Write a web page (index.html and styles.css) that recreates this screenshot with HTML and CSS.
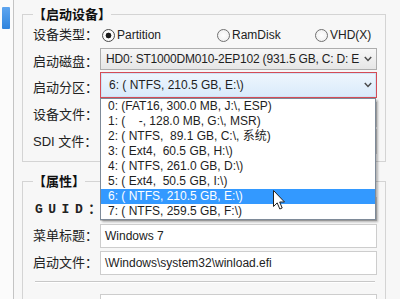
FILE: index.html
```html
<!DOCTYPE html>
<html lang="zh-CN">
<head>
<meta charset="utf-8">
<title>启动设备</title>
<link rel="stylesheet" href="styles.css">
</head>
<body>
<div class="window">
  <aside class="sidebar"><div class="side-item"></div></aside>
  <main class="main">
    <fieldset class="group g1">
      <legend class="group-title">【启动设备】</legend>
      <div class="row r-type">
        <span class="label">设备类型：</span>
        <div class="radios">
          <span class="radio"><span class="dot on"></span>Partition</span>
          <span class="radio"><span class="dot"></span>RamDisk</span>
          <span class="radio"><span class="dot"></span>VHD(X)</span>
        </div>
      </div>
      <div class="row r-disk">
        <span class="label low">启动磁盘：</span>
        <div class="select">
          <span class="value tight">HD0: ST1000DM010-2EP102 (931.5 GB, C: D: E</span>
          <svg class="chev" width="8" height="6" viewBox="0 0 8 6"><polyline points="0.8,1 4,4.4 7.2,1" fill="none" stroke="#4a4a4a" stroke-width="1.5"/></svg>
        </div>
      </div>
      <div class="row r-part">
        <span class="label low">启动分区：</span>
        <div class="select-wrap">
          <div class="select active">
            <span class="value">6: ( NTFS, 210.5 GB, E:\)</span>
            <svg class="chev" width="8" height="6" viewBox="0 0 8 6"><polyline points="0.8,1 4,4.4 7.2,1" fill="none" stroke="#4a4a4a" stroke-width="1.5"/></svg>
          </div>
          <ul class="dropdown">
            <li>0: (FAT16, 300.0 MB, J:\, ESP)</li>
            <li>1: (    -, 128.0 MB, G:\, MSR)</li>
            <li>2: ( NTFS,  89.1 GB, C:\, 系统)</li>
            <li>3: ( Ext4,  60.5 GB, H:\)</li>
            <li>4: ( NTFS, 261.0 GB, D:\)</li>
            <li>5: ( Ext4,  50.5 GB, I:\)</li>
            <li class="sel">6: ( NTFS, 210.5 GB, E:\)</li>
            <li>7: ( NTFS, 259.5 GB, F:\)</li>
          </ul>
        </div>
      </div>
      <div class="row r-file">
        <span class="label">设备文件：</span>
        <div class="input"></div>
      </div>
      <div class="row r-sdi">
        <span class="label">SDI 文件：</span>
        <div class="input"></div>
      </div>
    </fieldset>
    <fieldset class="group g2">
      <legend class="group-title">【属性】</legend>
      <div class="row r-guid">
        <span class="label guid">GUID<span class="colon">：</span></span>
        <div class="input"></div>
      </div>
      <div class="row r-menu">
        <span class="label">菜单标题：</span>
        <div class="input">Windows 7</div>
      </div>
      <div class="row r-boot">
        <span class="label">启动文件：</span>
        <div class="input">\Windows\system32\winload.efi</div>
      </div>
      <div class="sep"></div>
      <div class="row r-next">
        <span class="label"></span>
        <div class="input"></div>
      </div>
    </fieldset>
  </main>
  <svg class="cursor" width="14" height="22" viewBox="0 0 14 22"><path d="M1.5 1.5 L1.5 17.5 L5.2 13.9 L7.8 20 L10.2 19 L7.7 13 L12.5 13 Z" fill="#fff" stroke="#222" stroke-width="1" stroke-linejoin="round"/></svg>
</div>
</body>
</html>
```
FILE: styles.css
```css
* { box-sizing: border-box; }
html, body { margin: 0; padding: 0; }
body {
  width: 400px;
  height: 299px;
  overflow: hidden;
  background: #f4f4f4;
  font-family: "Liberation Sans", "Noto Sans CJK SC", sans-serif;
  font-size: 12px;
  color: #222;
}
.window { position: relative; display: flex; height: 299px; overflow: hidden; }
.sidebar {
  width: 14px;
  flex: none;
  border-right: 1px solid #c4c4c4;
  background: #fbfbfb;
  padding: 7px 3px 0 2px;
}
.side-item {
  height: 22px;
  background: linear-gradient(#5fa6f0, #2f84dd);
  border-radius: 1px;
}
.main { flex: 1; height: 299px; overflow: hidden; padding: 5px 14px 0 8px; background: #f7f7f7; }

.group {
  margin: 0;
  min-width: 0;
  padding: 0 8px 7px 10px;
  border: 1px solid #d4d4d4;
}
.g2 { margin-top: 10px; padding-top: 7px; }
.group-title {
  padding: 0;
  margin-left: 0;
  font-family: "Noto Sans CJK SC", sans-serif;
  font-weight: bold;
  font-size: 13px;
  line-height: 18px;
  color: #111;
}

.row { display: flex; align-items: center; }
.label {
  width: 67px;
  flex: none;
  font-family: "Liberation Sans", "Noto Sans CJK SC", sans-serif;
  font-size: 13px;
  line-height: 16px;
  color: #222;
  white-space: nowrap;
}
.label.low { padding-top: 6px; }
.label.guid {
  font-family: "Liberation Mono", monospace;
  font-weight: bold;
  letter-spacing: 5.5px;
  padding-left: 2px;
}
.label.guid .colon { font-family: "Noto Sans CJK SC", sans-serif; letter-spacing: 0; }

.r-type { height: 24px; }
.r-disk { height: 22px; margin-top: 1px; }
.r-part { height: 26px; margin-top: 2px; }
.r-file { height: 25px; margin-top: 4px; }
.r-sdi { height: 25px; margin-top: 2px; }
.r-guid { height: 24px; }
.r-menu { height: 24px; margin-top: 3px; }
.r-boot { height: 24px; margin-top: 3px; }
.r-next { height: 24px; margin-top: 11px; }

.radios {
  display: grid;
  grid-template-columns: 115px 98px auto;
  padding-left: 2px;
  font-size: 12px;
  color: #222;
}
.radio { display: flex; align-items: center; gap: 2px; }
.dot {
  width: 13px;
  height: 13px;
  border-radius: 50%;
  border: 1px solid #707070;
  background: radial-gradient(circle, #ffffff 0, #ececec 100%);
}
.dot.on { background: radial-gradient(circle, #1a1a1a 0 2.6px, #ffffff 3.2px, #eeeeee 100%); border-color: #4a4a4a; }

.select {
  width: 277px;
  height: 22px;
  display: flex;
  align-items: center;
  border: 1px solid #adadad;
  background: linear-gradient(#f7f7f7, #e6e6e6);
  padding-left: 5px;
}
.select-wrap { position: relative; width: 277px; height: 26px; }
.select.active {
  height: 26px;
  border-color: #d44c56;
  background: linear-gradient(#eef6fd, #d9eafb);
  box-shadow: inset 0 0 0 1px #cfe3f6;
  padding-left: 8px;
}
.value { flex: 1; white-space: nowrap; color: #1e1e1e; }
.value.tight { letter-spacing: -0.2px; }
.chev { flex: none; margin: 0 4px 0 2px; }

.dropdown {
  position: absolute;
  top: 26px;
  left: 0;
  width: 276px;
  margin: 0;
  padding: 0;
  list-style: none;
  background: #fff;
  border: 1px solid #7e8a98;
  box-shadow: 2px 2px 2px rgba(0, 0, 0, 0.28);
  z-index: 2;
}
.dropdown li {
  height: 15px;
  line-height: 15px;
  padding-left: 7px;
  white-space: pre;
  color: #1e1e1e;
}
.dropdown li.sel { background: #3399ff; color: #fff; }

.input {
  width: 277px;
  height: 100%;
  border: 1px solid #cdcdcd;
  background: #fff;
  padding-left: 4px;
  line-height: 22px;
  color: #222;
  white-space: nowrap;
}
.sep {
  margin: 6px 2px 0 2px;
  border-top: 1px solid #c8c8c8;
  border-bottom: 1px solid #fff;
}
.cursor { position: absolute; left: 272px; top: 189px; z-index: 5; }
```
